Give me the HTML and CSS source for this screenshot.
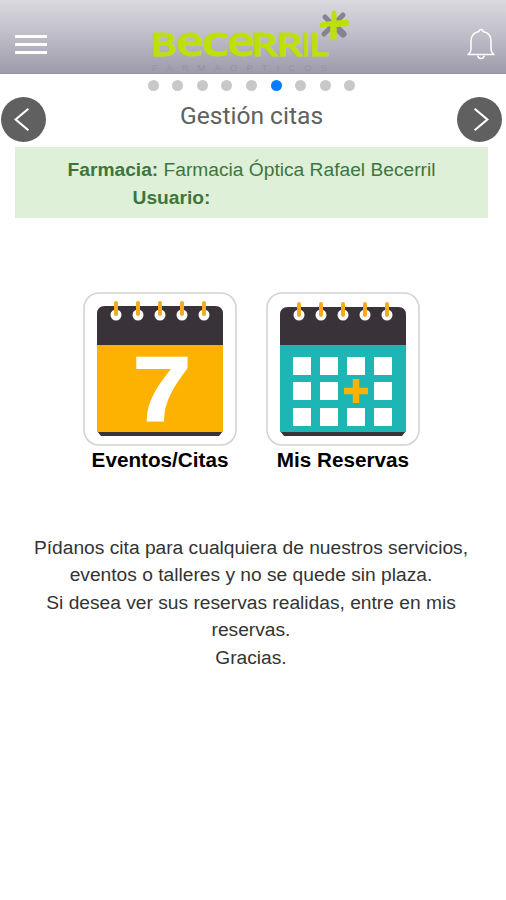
FILE: index.html
```html
<!DOCTYPE html>
<html lang="es">
<head>
    <meta charset="UTF-8">
    <meta name="viewport" content="width=device-width, initial-scale=1.0">
    <title>Gestión citas</title>
    <link rel="stylesheet" href="styles.css">
</head>
<body>
    <header class="topbar">
        <button class="menu-button" aria-label="Menú">
            <span></span>
            <span></span>
            <span></span>
        </button>
        <svg class="logo" width="204" height="66" viewBox="0 0 204 66">
            <g class="logo-name">
                <text x="-1" y="49" font-size="33" textLength="27" lengthAdjust="spacingAndGlyphs">B</text>
                <text x="25" y="49" font-size="42" textLength="28" lengthAdjust="spacingAndGlyphs">e</text>
                <text x="50" y="49" font-size="42" textLength="28" lengthAdjust="spacingAndGlyphs">c</text>
                <text x="76" y="49" font-size="42" textLength="28" lengthAdjust="spacingAndGlyphs">e</text>
                <text x="100" y="49" font-size="33" textLength="27" lengthAdjust="spacingAndGlyphs">R</text>
                <text x="125" y="49" font-size="33" textLength="27" lengthAdjust="spacingAndGlyphs">R</text>
                <text x="151" y="49" font-size="33" textLength="8" lengthAdjust="spacingAndGlyphs">I</text>
                <text x="158" y="49" font-size="33" textLength="20" lengthAdjust="spacingAndGlyphs">L</text>
            </g>
            <text class="logo-sub" x="1" y="64" font-size="9.500" textLength="175">FARMAOPTICOS</text>
            <g fill="none" stroke-linecap="round">
                <path stroke="#858490" stroke-width="5" d="M174 10l8 8M192 8l-10 10M182 18l-9 9"/>
                <path stroke="#858490" stroke-width="7" d="M187 22l5 5"/>
                <path stroke="#bfdf08" stroke-width="5" d="M183 6v12M171 18l12-2"/>
                <path stroke="#bfdf08" stroke-width="6.500" d="M182.500 18v12M183 17l12-1"/>
            </g>
        </svg>
        <svg class="bell" width="30" height="34" viewBox="0 0 30 34">
            <path d="M13 4.500a2 2 0 0 1 4 0C22 5.500 25 9 25 14v8c0 2.500 1 4 3 5.500H2C4 26 5 24.500 5 22v-8c0-5 3-8.500 8-9.500z"/>
            <path d="M12 28.500a3 3 0 0 0 6 0"/>
        </svg>
    </header>

    <section class="slider">
        <div class="dots">
            <i></i><i></i><i></i><i></i><i></i><i class="active"></i><i></i><i></i><i></i>
        </div>
        <div class="slider-nav">
            <button class="arrow" aria-label="Anterior">
                <svg width="45" height="45" viewBox="0 0 46 46"><path d="M28 12L15 23l13 11"/></svg>
            </button>
            <h1>Gestión citas</h1>
            <button class="arrow" aria-label="Siguiente">
                <svg width="45" height="45" viewBox="0 0 46 46"><path d="M18 12l13 11-13 11"/></svg>
            </button>
        </div>
    </section>

    <div class="user-info">
        <p><b>Farmacia:</b> Farmacia Óptica Rafael Becerril</p>
        <p class="user"><b>Usuario:</b></p>
    </div>

    <main>
        <div class="options">
            <a class="option">
                <svg width="154" height="154" viewBox="0 0 154 154">
                    <rect class="card" x="1" y="1" width="152" height="152" rx="15"/>
                    <path fill="#393339" d="M14 54V22q0-8 8-8h110q8 0 8 8v32zM14 139h126l-4 5H18z"/>
                    <path fill="#fdb100" d="M14 53h126v87H14z"/>
                    <g fill="#fff">
                        <circle cx="33" cy="23" r="5.500"/><circle cx="55" cy="23" r="5.500"/><circle cx="77" cy="23" r="5.500"/><circle cx="99" cy="23" r="5.500"/><circle cx="121" cy="23" r="5.500"/>
                    </g>
                    <path class="rings" d="M33 11v11M55 11v11M77 11v11M99 11v11M121 11v11"/>
                    <text class="day" x="50" y="128" textLength="58" lengthAdjust="spacingAndGlyphs">7</text>
                </svg>
                <span>Eventos/Citas</span>
            </a>
            <a class="option">
                <svg width="154" height="154" viewBox="0 0 154 154">
                    <rect class="card" x="1" y="1" width="152" height="152" rx="15"/>
                    <path fill="#393339" d="M14 54V23q0-8 8-8h110q8 0 8 8v31zM14 139h126l-4 5H18z"/>
                    <path fill="#1db6b5" d="M14 53h126v87H14z"/>
                    <g fill="#fff">
                        <circle cx="33" cy="23" r="5.500"/><circle cx="55" cy="23" r="5.500"/><circle cx="77" cy="23" r="5.500"/><circle cx="99" cy="23" r="5.500"/><circle cx="121" cy="23" r="5.500"/>
                        <path d="M27 65h18v18H27zM54 65h18v18H54zM81 65h18v18H81zM108 65h18v18h-18z"/>
                        <path d="M27 90h18v18H27zM54 90h18v18H54zM108 90h18v18h-18z"/>
                        <path d="M27 116h18v18H27zM54 116h18v18H54zM81 116h18v18H81zM108 116h18v18h-18z"/>
                    </g>
                    <path class="rings" d="M33 12v11M55 12v11M77 12v11M99 12v11M121 12v11"/>
                    <path stroke="#fdb100" stroke-width="6.500" d="M90 87v24M78 99h24"/>
                </svg>
                <span>Mis Reservas</span>
            </a>
        </div>

        <p class="message">
            Pídanos cita para cualquiera de nuestros servicios,<br>
            eventos o talleres y no se quede sin plaza.<br>
            Si desea ver sus reservas realidas, entre en mis<br>
            reservas.<br>
            Gracias.
        </p>
    </main>
</body>
</html>
```
FILE: styles.css
```css
* {
    box-sizing: border-box;
}

body {
    margin: 0;
    background-color: #fff;
    font-family: "Liberation Sans", Arial, sans-serif;
    font-size: 19.2px;
    line-height: 27.5px;
    color: #333;
}

p, h1 {
    margin: 0;
}

button {
    border: none;
    padding: 0;
    background: none;
    cursor: pointer;
}

.topbar {
    display: flex;
    justify-content: space-between;
    align-items: flex-end;
    height: 74px;
    padding: 0 10px 0 15px;
    background: linear-gradient(#dad9df, #c4c2cc 40%, #9e9cab);
    border-bottom: 1px solid #96959f;
}

.menu-button {
    display: flex;
    flex-direction: column;
    gap: 5px;
    width: 32px;
    margin-bottom: 19px;
}

.menu-button span {
    height: 3px;
    background-color: #fff;
}

.logo {
    margin-left: 104px;
    margin-right: auto;
    overflow: visible;
}

.logo-name {
    font-family: "Open Sans", sans-serif;
    font-weight: 600;
    fill: #bfdf08;
    stroke: #bfdf08;
    stroke-width: 0.8px;
}

.logo-sub {
    fill: #95939f;
}

.bell {
    margin-bottom: 12px;
    fill: none;
    stroke: #fff;
    stroke-width: 1.5px;
    stroke-linejoin: round;
}

.dots {
    display: flex;
    justify-content: center;
    gap: 13.6px;
    padding-top: 6px;
    margin-right: 3px;
}

.dots i {
    width: 11px;
    height: 11px;
    border-radius: 50%;
    background-color: #c8c8c8;
}

.dots .active {
    background-color: #087cff;
}

.slider-nav {
    display: flex;
    justify-content: space-between;
    padding: 6px 4px 0 1px;
    height: 56px;
}

.slider-nav h1 {
    font-family: Roboto, sans-serif;
    font-weight: 400;
    font-size: 24.6px;
    line-height: 37px;
    color: #606060;
}

.arrow {
    width: 45px;
    height: 45px;
}

.arrow svg {
    display: block;
    border-radius: 50%;
    background-color: #606060;
    fill: none;
    stroke: #fff;
    stroke-width: 2.2px;
}

.user-info {
    height: 71px;
    margin: 0 18px 0 15px;
    padding-top: 9px;
    background-color: #dff0d8;
    color: #3c763d;
    text-align: center;
}

.user-info .user {
    padding-right: 160px;
}

.options {
    display: flex;
    justify-content: center;
    gap: 29px;
    margin: 74px 3px 0 0;
}

.option {
    display: flex;
    flex-direction: column;
    align-items: center;
    width: 154px;
    font-size: 20.7px;
    font-weight: bold;
    color: #000;
}

.card {
    fill: #fff;
    stroke: #d2d2d2;
    stroke-width: 1.5px;
}

.rings {
    stroke: #f5ab20;
    stroke-width: 4px;
    stroke-linecap: round;
}

.day {
    font-size: 90px;
    font-weight: bold;
    fill: #fff;
    stroke: #fff;
    stroke-width: 2px;
}

.message {
    margin: 60px 4px 0 0;
    text-align: center;
}
```
